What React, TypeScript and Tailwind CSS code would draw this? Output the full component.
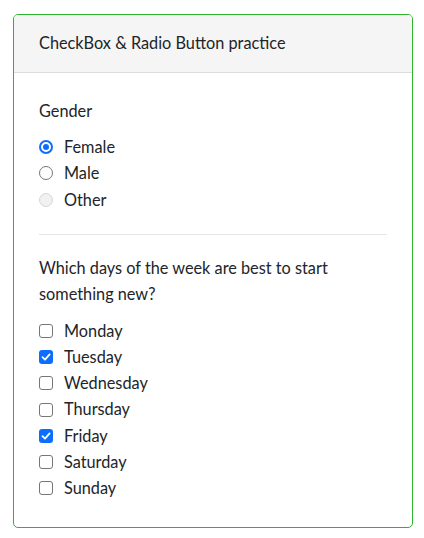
import { useState } from "react";

const days = ["Monday", "Tuesday", "Wednesday", "Thursday", "Friday", "Saturday", "Sunday"];

function Radio({ checked, disabled }: { checked?: boolean; disabled?: boolean }) {
  if (checked) {
    return (
      <span className="w-[14px] h-[14px] rounded-full border-2 border-[#0d6efd] bg-white flex items-center justify-center">
        <span className="w-[6px] h-[6px] rounded-full bg-[#0d6efd]" />
      </span>
    );
  }
  return (
    <span
      className={
        disabled
          ? "w-[14px] h-[14px] rounded-full border border-[#d6d6d6] bg-[#f1f1f1]"
          : "w-[14px] h-[14px] rounded-full border border-[#767676] bg-white"
      }
    />
  );
}

function Check({ checked }: { checked?: boolean }) {
  if (checked) {
    return (
      <span className="w-[14px] h-[14px] rounded-[3px] bg-[#0d6efd] flex items-center justify-center">
        <svg width="10" height="10" viewBox="0 0 10 10" fill="none">
          <path d="M1.5 5.2 L4 7.6 L8.6 2.4" stroke="white" strokeWidth="1.8" strokeLinecap="round" strokeLinejoin="round" />
        </svg>
      </span>
    );
  }
  return <span className="w-[14px] h-[14px] rounded-[3px] border border-[#767676] bg-white" />;
}

export default function App() {
  const [gender] = useState("Female");
  const [picked] = useState(["Tuesday", "Friday"]);

  return (
    <div className="min-h-[538px] bg-white pt-[14px] pl-[13px] font-['Lato',sans-serif] text-[16.3px] text-[#212529]">
      <div className="w-[400px] border border-[#2db52d] rounded-[5px] overflow-hidden">
        {/* Header */}
        <div className="h-[58px] bg-[#f5f5f5] border-b border-[#dcdcdc] flex items-center px-[25px]">
          CheckBox &amp; Radio Button practice
        </div>

        {/* Body */}
        <div className="px-[25px] pt-[26px] pb-[26px]">
          <div className="leading-[24px]">Gender</div>
          <div className="mt-[11px]">
            {["Female", "Male", "Other"].map((g) => (
              <div key={g} className="h-[26.3px] flex items-center gap-[11px]">
                <Radio checked={gender === g} disabled={g === "Other"} />
                <span>{g}</span>
              </div>
            ))}
          </div>

          <div className="mt-[21px] mb-[20px] border-t border-[#e6e6e6]" />

          <div className="leading-[26px]">
            Which days of the week are best to start something new?
          </div>
          <div className="mt-[11px]">
            {days.map((d) => (
              <div key={d} className="h-[26.2px] flex items-center gap-[11px]">
                <Check checked={picked.includes(d)} />
                <span>{d}</span>
              </div>
            ))}
          </div>
        </div>
      </div>
    </div>
  );
}
